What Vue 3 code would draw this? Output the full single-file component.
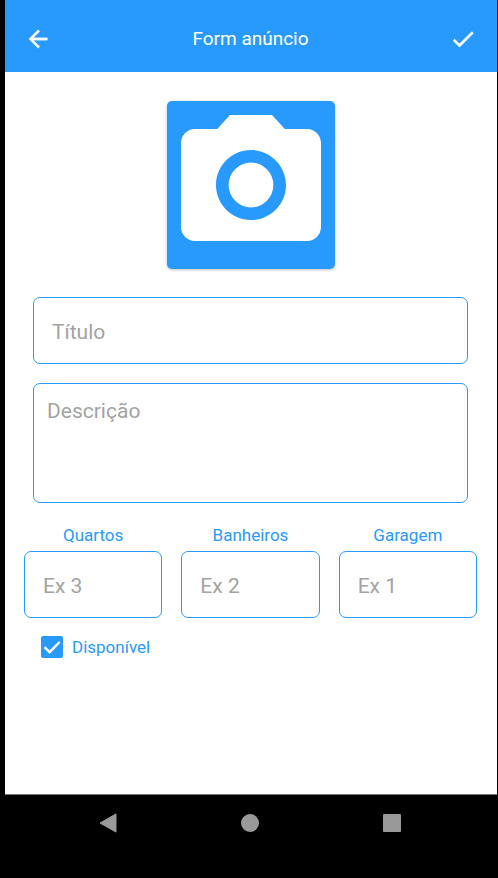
<script setup>
import { ref } from 'vue'

const title = ref('')
const description = ref('')
const available = ref(true)
const counts = ref([
  { id: 'quartos', label: 'Quartos', hint: 'Ex 3', value: '' },
  { id: 'banheiros', label: 'Banheiros', hint: 'Ex 2', value: '' },
  { id: 'garagem', label: 'Garagem', hint: 'Ex 1', value: '' },
])
</script>

<template>
  <div class="device">
    <header class="bar">
      <button type="button" class="icon-btn" aria-label="Voltar">
        <svg viewBox="0 0 24 24" width="28" height="28" fill="currentColor">
          <path d="M20 11V13H8L13.5 18.5L12.08 19.92L4.16 12L12.08 4.08L13.5 5.5L8 11H20Z" stroke="currentColor" stroke-width=".3" stroke-linejoin="round" />
        </svg>
      </button>
      <h1>Form anúncio</h1>
      <button type="button" class="icon-btn" aria-label="Salvar">
        <svg viewBox="0 0 24 24" width="28" height="28" fill="currentColor">
          <path d="M9 16.17L4.83 12l-1.42 1.41L9 19 21 7l-1.41-1.41z" stroke="currentColor" stroke-width=".3" />
        </svg>
      </button>
    </header>

    <main>
      <form class="form" @submit.prevent>
        <button type="button" class="photo" aria-label="Adicionar foto">
          <svg viewBox="0 0 24 24" width="168" height="168" fill="currentColor">
            <circle cx="12" cy="12" r="3.2" />
            <path d="M9 2L7.17 4H4c-1.1 0-2 .9-2 2v12c0 1.1.9 2 2 2h16c1.1 0 2-.9 2-2V6c0-1.1-.9-2-2-2h-3.17L15 2H9zm3 15c-2.76 0-5-2.24-5-5s2.24-5 5-5 5 2.24 5 5-2.24 5-5 5z" />
          </svg>
        </button>

        <div class="texts">
          <input v-model="title" class="field" type="text" placeholder="Título" aria-label="Título" />
          <textarea v-model="description" class="field area" placeholder="Descrição" aria-label="Descrição"></textarea>
        </div>

        <div class="counts">
          <div v-for="c in counts" :key="c.id" class="count">
            <label :for="c.id">{{ c.label }}</label>
            <input :id="c.id" v-model="c.value" class="field" type="text" inputmode="numeric" :placeholder="c.hint" />
          </div>
        </div>

        <label class="check">
          <input v-model="available" type="checkbox" />
          <span class="box">
            <svg v-if="available" viewBox="0 0 22 22" width="22" height="22" fill="none" stroke="currentColor" stroke-width="2.4">
              <path d="M3.5 11.2L8.6 16.2L18.6 6" />
            </svg>
          </span>
          <span>Disponível</span>
        </label>
      </form>
    </main>

    <nav class="system">
      <button type="button" aria-label="Voltar do sistema">
        <svg viewBox="0 0 20 20" width="20" height="20" fill="currentColor" stroke="currentColor" stroke-linejoin="round">
          <path d="M2 10L18 .9V19.1Z" />
        </svg>
      </button>
      <button type="button" aria-label="Início">
        <svg viewBox="0 0 20 20" width="20" height="20" fill="currentColor">
          <circle cx="10" cy="10" r="9" />
        </svg>
      </button>
      <button type="button" aria-label="Recentes">
        <svg viewBox="0 0 20 20" width="20" height="20" fill="currentColor">
          <rect x="1" y="1" width="18" height="18" rx="1" />
        </svg>
      </button>
    </nav>
  </div>
</template>

<style>
body {
  margin: 0;
  background: #000;
}
</style>

<style scoped>
.device {
  --blue: #2899fd;
  box-sizing: border-box;
  display: flex;
  flex-direction: column;
  min-height: 100vh;
  padding: 0 1px 0 5px;
  background: #000;
  font-family: Roboto, "Liberation Sans", sans-serif;
}
button {
  display: flex;
  align-items: center;
  justify-content: center;
  padding: 0;
  border: 0;
  background: none;
  color: inherit;
  cursor: pointer;
}
.bar {
  display: flex;
  align-items: center;
  justify-content: space-between;
  box-sizing: border-box;
  height: 72px;
  padding: 6px 20px 0 19px;
  background: var(--blue);
  color: #fff;
}
.bar h1 {
  margin: 0;
  font-size: 19px;
  font-weight: 400;
  line-height: 24px;
}
main {
  flex: 1;
  background: #fff;
  border-bottom: 1px solid #777;
}
.form {
  display: flex;
  flex-direction: column;
  padding: 29px 20px 29px 19px;
}
.photo {
  align-self: center;
  border-radius: 5px;
  background: var(--blue);
  color: #fff;
  box-shadow: 0 1px 3px rgba(0, 0, 0, 0.25);
}
.texts {
  display: flex;
  flex-direction: column;
  gap: 19px;
  margin: 28px 9px 0;
}
.field {
  box-sizing: border-box;
  display: block;
  width: 100%;
  height: 67px;
  margin: 0;
  padding: 2px 18px 0;
  border: 1px solid var(--blue);
  border-radius: 7px;
  outline: 0;
  background: #fff;
  color: #333;
  font-family: inherit;
  font-size: 21px;
  line-height: 26px;
}
.field::placeholder {
  color: #a3a3a3;
  opacity: 1;
}
.area {
  height: 120px;
  padding: 14px 13px;
  resize: none;
}
.counts {
  display: grid;
  grid-template-columns: repeat(3, 1fr);
  gap: 19px;
  margin-top: 22px;
}
.count {
  display: flex;
  flex-direction: column;
  gap: 6px;
}
.count label {
  text-align: center;
}
label {
  color: var(--blue);
  font-size: 17px;
  line-height: 20px;
}
.check {
  display: flex;
  align-self: flex-start;
  align-items: center;
  gap: 9px;
  margin: 18px 0 0 17px;
  cursor: pointer;
}
.check input {
  position: absolute;
  width: 22px;
  height: 22px;
  margin: 0;
  opacity: 0;
}
.box {
  box-sizing: border-box;
  width: 22px;
  height: 22px;
  border-radius: 2px;
  background: var(--blue);
  color: #fff;
}
.box svg {
  display: block;
}
.system {
  display: flex;
  justify-content: space-between;
  align-items: flex-start;
  box-sizing: border-box;
  height: 83px;
  padding: 18px 95px 0 93px;
  color: #999;
}
</style>
